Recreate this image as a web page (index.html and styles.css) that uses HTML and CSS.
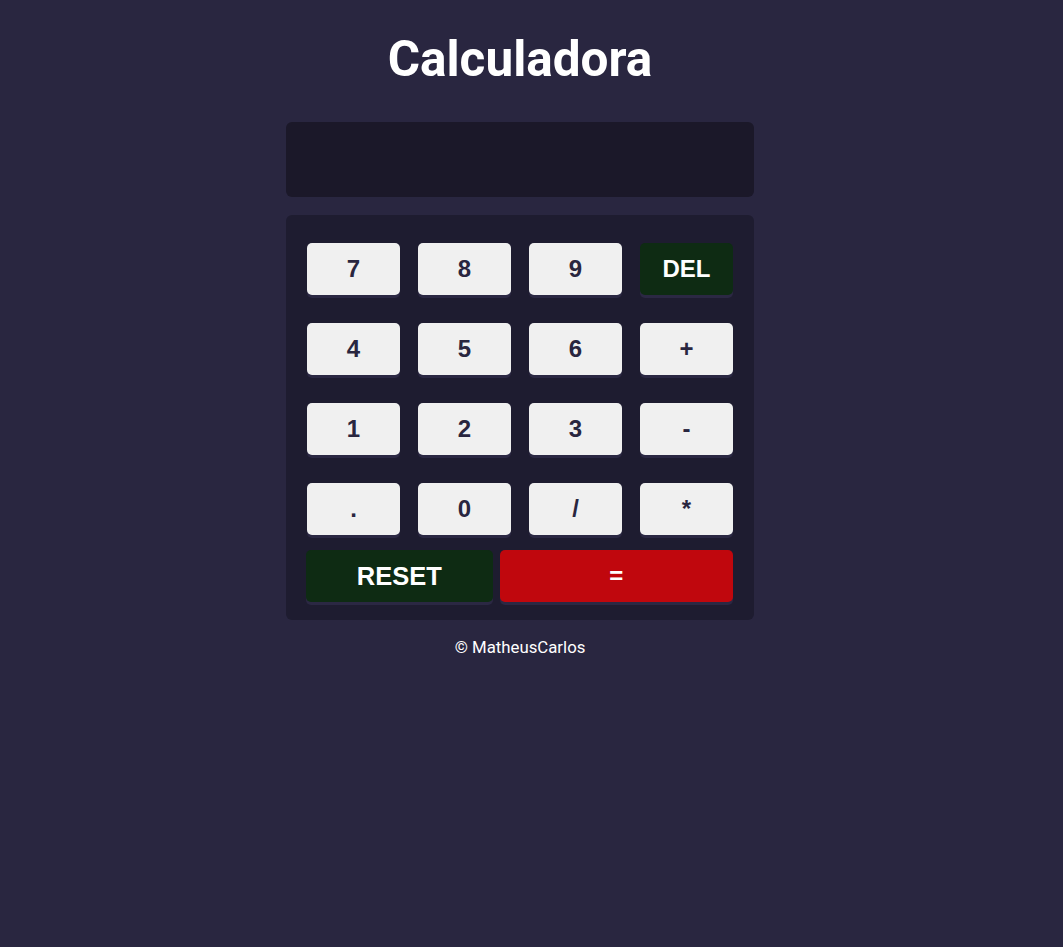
FILE: index.html
```html
<!DOCTYPE html>
<html lang="pt-BR">
<head>
<meta charset="UTF-8">
<title>Calculadora</title>
<link rel="stylesheet" href="styles.css">
</head>
<body>
<main class="app">
  <h1 class="title">Calculadora</h1>
  <div class="display"></div>
  <div class="keypad">
    <div class="keys">
      <button class="key">7</button>
      <button class="key">8</button>
      <button class="key">9</button>
      <button class="key key-del">DEL</button>
      <button class="key">4</button>
      <button class="key">5</button>
      <button class="key">6</button>
      <button class="key">+</button>
      <button class="key">1</button>
      <button class="key">2</button>
      <button class="key">3</button>
      <button class="key">-</button>
      <button class="key">.</button>
      <button class="key">0</button>
      <button class="key">/</button>
      <button class="key">*</button>
    </div>
    <div class="bottom-row">
      <button class="key key-reset">RESET</button>
      <button class="key key-equal">=</button>
    </div>
  </div>
  <footer class="footer">© MatheusCarlos</footer>
</main>
</body>
</html>
```
FILE: styles.css
```css
* { box-sizing: border-box; }
html, body { margin: 0; padding: 0; }
body {
  background: #292640;
  font-family: Roboto, "Liberation Sans", sans-serif;
  color: #fff;
  min-height: 947px;
  padding-right: 23px;
}
.app {
  width: 468px;
  margin: 0 auto;
  padding-top: 24px;
  display: flex;
  flex-direction: column;
}
.title {
  margin: 0 0 28px;
  text-align: center;
  font-size: 49.5px;
  font-weight: 700;
  line-height: 70px;
}
.display {
  height: 75px;
  background: #1b1829;
  border-radius: 6px;
  margin-bottom: 18px;
}
.keypad {
  background: #1e1c30;
  border-radius: 6px;
  padding: 28px 21px 18px 21px;
}
.keys {
  display: grid;
  grid-template-columns: repeat(4, 93px);
  column-gap: 18px;
  row-gap: 28px;
}
.key {
  height: 52px;
  border: none;
  border-radius: 5px;
  background: #f0f0f0;
  color: #29263f;
  font-family: "Liberation Sans", Arial, sans-serif;
  font-weight: 700;
  font-size: 24px;
  box-shadow: 0 3px 0 #2b2843;
  padding: 0;
  cursor: pointer;
}
.key-del {
  background: #0e2b13;
  color: #fff;
}
.bottom-row {
  display: flex;
  gap: 7px;
  margin-top: 15px;
  margin-left: -1px;
}
.key-reset {
  width: 187px;
  background: #0e2b13;
  color: #fff;
  font-size: 25.5px;
}
.key-equal {
  width: 234px;
  background: #c0070d;
  color: #fff;
}
.footer {
  text-align: center;
  font-size: 16.8px;
  margin-top: 17px;
}
```
